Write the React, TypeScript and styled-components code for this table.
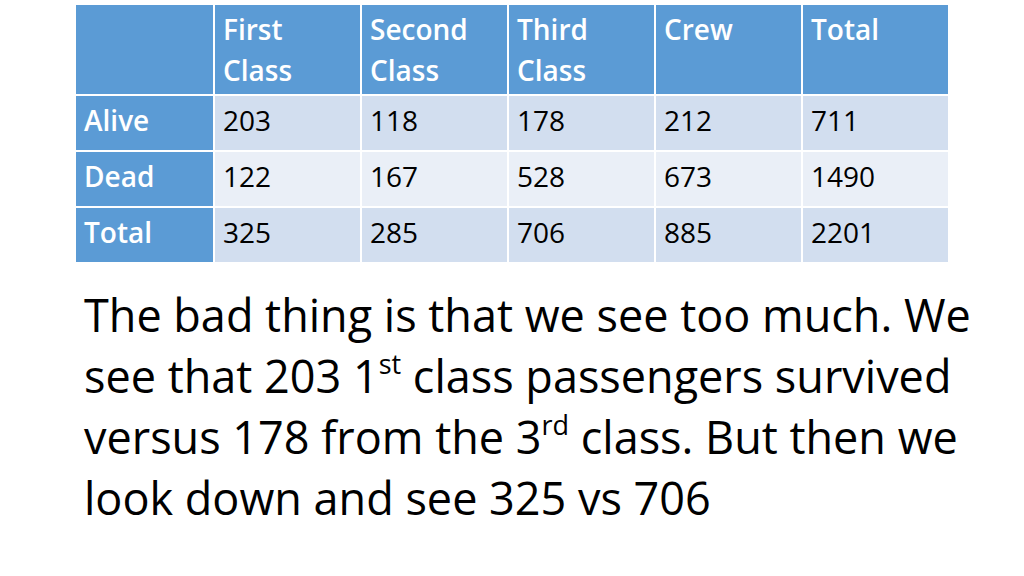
import React from "react";
import styled, { createGlobalStyle } from "styled-components";

const Global = createGlobalStyle`
  html, body { margin: 0; padding: 0; background: #ffffff; }
  body { font-family: "Open Sans", Lato, sans-serif; }
`;

const Slide = styled.div`
  width: 1024px;
  height: 576px;
  box-sizing: border-box;
  padding: 5px 0 0 76px;
  display: flex;
  flex-direction: column;
  background: #ffffff;
`;

const Table = styled.div`
  display: grid;
  grid-template-columns: 137px repeat(5, 145px);
  grid-template-rows: 89px repeat(3, 54px);
  width: 872px;
  gap: 2px;
  background: #ffffff;
`;

const Cell = styled.div<{ $kind: "head" | "odd" | "even" }>`
  box-sizing: border-box;
  padding: 4px 4px 0 8px;
  font-family: "Open Sans", Lato, sans-serif;
  font-size: 28px;
  line-height: 41px;
  font-weight: ${(p) => (p.$kind === "head" ? 600 : 400)};
  color: ${(p) => (p.$kind === "head" ? "#ffffff" : "#000000")};
  background: ${(p) =>
    p.$kind === "head" ? "#5b9bd5" : p.$kind === "odd" ? "#d2deef" : "#eaeff7"};
`;

const Paragraph = styled.p`
  margin: 22px 0 0 8px;
  font-family: "Open Sans", Lato, sans-serif;
  font-size: 45px;
  line-height: 61px;
  color: #000000;
  white-space: nowrap;
`;

const Sup = styled.sup`
  font-size: 0.6em;
  line-height: 0;
  vertical-align: 0.72em;
`;

const headers: React.ReactNode[] = [
  "",
  <>First<br />Class</>,
  <>Second<br />Class</>,
  <>Third<br />Class</>,
  "Crew",
  "Total",
];
const rows: [string, string[]][] = [
  ["Alive", ["203", "118", "178", "212", "711"]],
  ["Dead", ["122", "167", "528", "673", "1490"]],
  ["Total", ["325", "285", "706", "885", "2201"]],
];

export default function App() {
  return (
    <>
      <Global />
      <Slide>
        <Table>
          {headers.map((h, i) => (
            <Cell key={"h" + i} $kind="head">
              {h}
            </Cell>
          ))}
          {rows.map(([label, vals], r) => (
            <React.Fragment key={label}>
              <Cell $kind="head">{label}</Cell>
              {vals.map((v, c) => (
                <Cell key={c} $kind={r % 2 === 0 ? "odd" : "even"}>
                  {v}
                </Cell>
              ))}
            </React.Fragment>
          ))}
        </Table>
        <Paragraph>
          The bad thing is that we see too much. We
          <br />
          see that 203 1<Sup>st</Sup> class passengers survived
          <br />
          versus 178 from the 3<Sup>rd</Sup> class. But then we
          <br />
          look down and see 325 vs 706
        </Paragraph>
      </Slide>
    </>
  );
}
